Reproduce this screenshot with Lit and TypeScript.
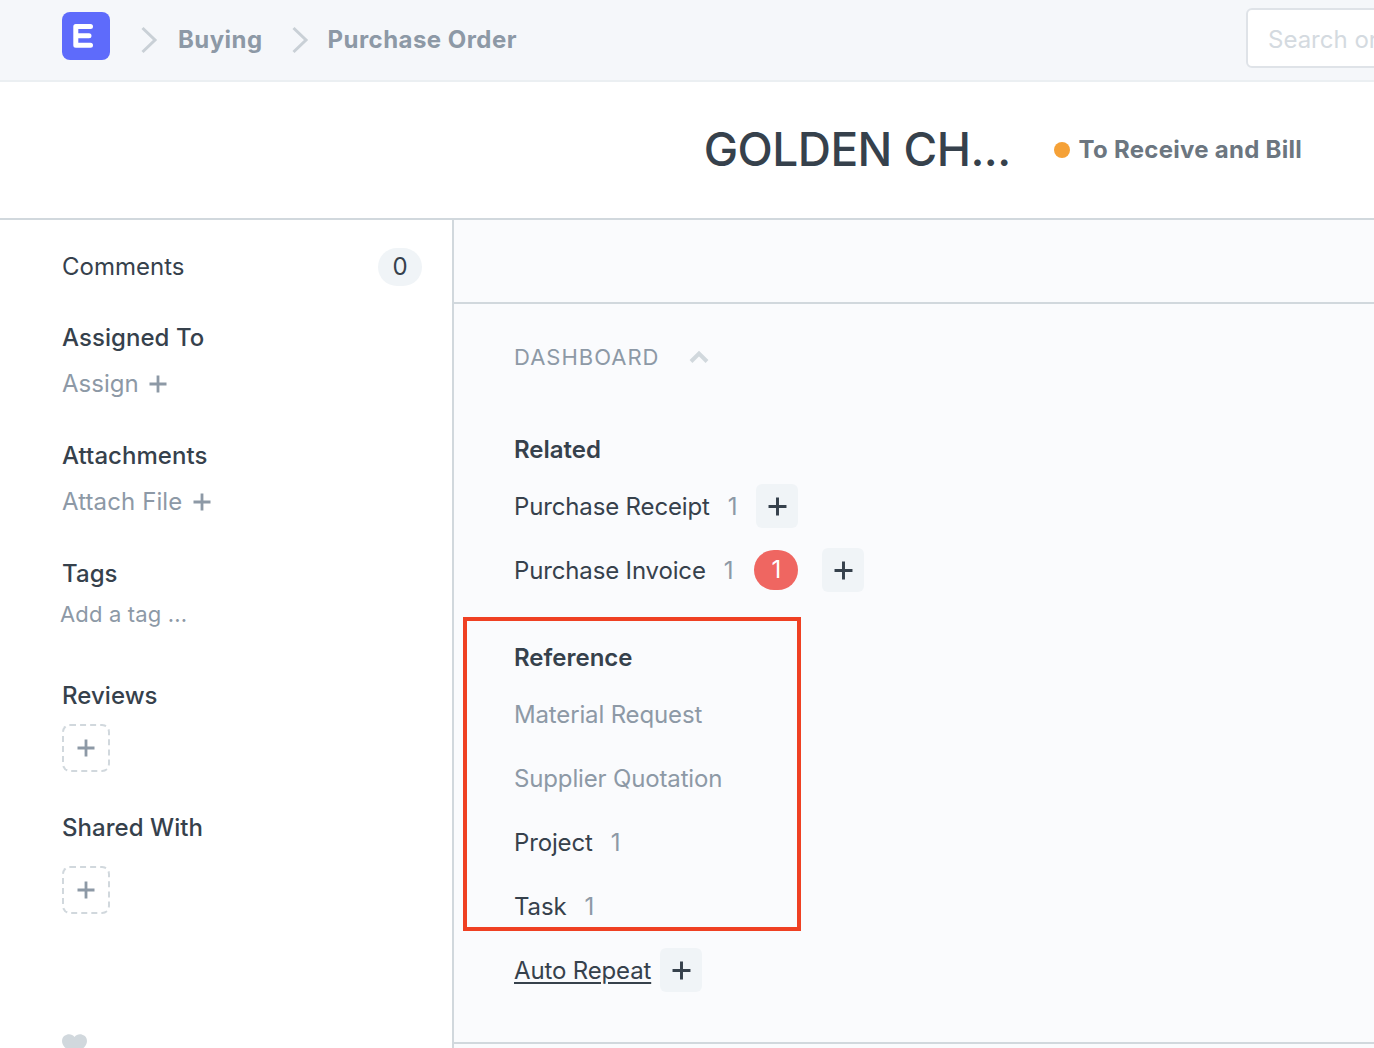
import { LitElement, html, css, svg } from 'lit';
import { customElement } from 'lit/decorators.js';

const plus = (size: number, weight: number) => html`<svg class="plus" width=${size} height=${size} viewBox="0 0 18 18">
  ${svg`<path d="M9 0.5V17.5M0.5 9H17.5" fill="none" stroke="currentColor" stroke-width=${weight}/>`}
</svg>`;

const chevron = html`<svg class="crumb-arrow" width="18" height="28" viewBox="0 0 18 28">
  <path d="M2.5 2L15 14L2.5 26" fill="none" stroke="#c9d0d6" stroke-width="3"/>
</svg>`;

@customElement('app-root')
export class AppRoot extends LitElement {
  static override styles = css`
    :host {
      display: block;
      position: relative;
      height: 1048px;
      overflow: hidden;
      background: #fff;
      color: #36414c;
      font-family: 'Inter', 'Liberation Sans', sans-serif;
      font-size: 24px;
      line-height: 36px;
    }

    .navbar {
      display: flex;
      align-items: center;
      height: 80px;
      padding-left: 62px;
      background: #f5f7fa;
      border-bottom: 2px solid #ebeff2;
      overflow: hidden;
    }
    .logo {
      display: block;
      flex: none;
      margin-bottom: 8px;
    }
    .crumb-arrow {
      flex: none;
      margin: 0 20px 0 30px;
    }
    .crumb-arrow.second {
      margin: 0 19px 0 28px;
    }
    .crumb {
      color: #8d99a6;
      font-weight: 700;
      letter-spacing: 0.45px;
      white-space: nowrap;
    }
    .search {
      flex: none;
      box-sizing: border-box;
      width: 300px;
      height: 60px;
      margin-left: auto;
      margin-right: -172px;
      margin-bottom: 5px;
      padding: 4px 20px 0;
      display: flex;
      align-items: center;
      background: #fff;
      border: 2px solid #dfe3e8;
      border-radius: 6px;
      color: #d4dae0;
      white-space: nowrap;
    }

    .title-bar {
      display: flex;
      align-items: center;
      justify-content: flex-end;
      height: 136px;
      padding-right: 72px;
      border-bottom: 2px solid #d1d8dd;
    }
    .title {
      margin-bottom: 2px;
      font-size: 46px;
      line-height: 56px;
      font-weight: 500;
      letter-spacing: -0.55px;
      white-space: nowrap;
    }
    .status {
      display: flex;
      align-items: center;
      gap: 9px;
      margin-left: 43px;
      color: #6c7680;
      font-weight: 700;
      letter-spacing: 0.27px;
    }
    .dot {
      width: 16px;
      height: 16px;
      border-radius: 50%;
      background: #f5a137;
    }

    .body {
      display: flex;
      height: 828px;
    }

    .sidebar {
      box-sizing: border-box;
      width: 454px;
      flex: none;
      padding: 28px 30px 0 62px;
      border-right: 2px solid #d1d8dd;
    }
    .comments {
      display: flex;
      align-items: center;
      justify-content: space-between;
      height: 38px;
    }
    .count-pill {
      width: 44px;
      height: 38px;
      display: flex;
      align-items: center;
      justify-content: center;
      border-radius: 19px;
      background: #f0f4f7;
    }
    .side-section {
      margin-top: 36px;
    }
    .side-section.first {
      margin-top: 34px;
    }
    .side-title {
      font-weight: 500;
      margin-bottom: 10px;
      letter-spacing: 0.05px;
    }
    .side-action {
      display: flex;
      align-items: center;
      gap: 10px;
      color: #8d99a6;
    }
    .side-action.wide {
      gap: 11px;
      letter-spacing: 0.1px;
    }
    .tag-input {
      margin: -6px 0 0 -2px;
      color: #8d99a6;
      font-size: 22px;
      letter-spacing: 0.15px;
    }
    .side-section.reviews {
      margin-top: 46px;
    }
    .side-section.shared {
      margin-top: 38px;
    }
    .side-section.shared .side-title {
      margin-bottom: 20px;
    }
    .dashed {
      box-sizing: border-box;
      width: 48px;
      height: 48px;
      display: flex;
      align-items: center;
      justify-content: center;
      border: 2px dashed #d1d8dd;
      border-radius: 8px;
      color: #8d99a6;
    }
    .heart {
      display: block;
      margin-top: 120px;
    }

    .main {
      flex: 1;
      min-width: 0;
      background: #fafbfd;
    }
    .toolbar-band {
      height: 82px;
      border-bottom: 2px solid #d1d8dd;
    }
    .dashboard {
      padding: 0 0 40px 60px;
      border-bottom: 2px solid #d1d8dd;
    }
    .dash-head {
      display: flex;
      align-items: center;
      gap: 30px;
      height: 105px;
      margin-bottom: 17px;
      color: #8d99a6;
      font-size: 22px;
      letter-spacing: 1px;
    }
    .group + .group {
      margin-top: 32px;
    }
    .group-title {
      height: 48px;
      display: flex;
      align-items: center;
      font-weight: 600;
    }
    .row {
      box-sizing: border-box;
      display: flex;
      align-items: center;
      height: 64px;
      padding-top: 2px;
      letter-spacing: -0.15px;
      white-space: nowrap;
    }
    .row.off {
      color: #8d99a6;
    }
    .count {
      margin-left: 18px;
      color: #8d99a6;
    }
    .add {
      width: 42px;
      height: 44px;
      flex: none;
      display: flex;
      align-items: center;
      justify-content: center;
      margin: -2px 0 0 19px;
      border-radius: 6px;
      background: #f0f4f7;
    }
    .add.after-badge {
      margin-left: 24px;
    }
    .add.tight {
      margin-left: 9px;
    }
    .badge {
      width: 44px;
      height: 40px;
      display: flex;
      align-items: center;
      justify-content: center;
      margin: -2px 0 0 21px;
      border-radius: 20px;
      background: #ef6661;
      color: #fff;
    }
    .link {
      text-decoration: underline;
      text-underline-offset: 3px;
    }

    .highlight {
      position: absolute;
      left: 463px;
      top: 617px;
      box-sizing: border-box;
      width: 338px;
      height: 314px;
      border: 4px solid #ef4023;
      pointer-events: none;
    }
  `;

  override render() {
    return html`
      <header class="navbar">
        <svg class="logo" width="48" height="48" viewBox="0 0 48 48" role="img" aria-label="ERPNext">
          <rect width="48" height="48" rx="8" fill="#5e6bfb"/>
          <path d="M28.5 14.5H13.8V33.2H28.5M13.8 23.8H27" fill="none" stroke="#fff" stroke-width="5" stroke-linecap="round" stroke-linejoin="round"/>
        </svg>
        ${chevron}
        <span class="crumb">Buying</span>
        <svg class="crumb-arrow second" width="18" height="28" viewBox="0 0 18 28">
          <path d="M2.5 2L15 14L2.5 26" fill="none" stroke="#c9d0d6" stroke-width="3"/>
        </svg>
        <span class="crumb">Purchase Order</span>
        <div class="search">Search or type a command</div>
      </header>

      <div class="title-bar">
        <div class="title">GOLDEN CH...</div>
        <div class="status"><span class="dot"></span>To Receive and Bill</div>
      </div>

      <div class="body">
        <aside class="sidebar">
          <div class="comments"><span>Comments</span><span class="count-pill">0</span></div>

          <div class="side-section first">
            <div class="side-title">Assigned To</div>
            <div class="side-action">Assign ${plus(18, 2.8)}</div>
          </div>

          <div class="side-section">
            <div class="side-title">Attachments</div>
            <div class="side-action wide">Attach File ${plus(18, 2.8)}</div>
          </div>

          <div class="side-section">
            <div class="side-title">Tags</div>
            <div class="tag-input">Add a tag ...</div>
          </div>

          <div class="side-section reviews">
            <div class="side-title">Reviews</div>
            <div class="dashed">${plus(18, 2.8)}</div>
          </div>

          <div class="side-section shared">
            <div class="side-title">Shared With</div>
            <div class="dashed">${plus(18, 2.8)}</div>
          </div>

          <svg class="heart" width="25" height="23" viewBox="0 0 25 23">
            <path d="M12.5 23L2.5 13C-0.8 9.6 -0.8 4.4 2.5 1.8C5.8 -0.8 10.2 -0.3 12.5 3C14.8 -0.3 19.2 -0.8 22.5 1.8C25.8 4.4 25.8 9.6 22.5 13Z" fill="#d1d8dd"/>
          </svg>
        </aside>

        <main class="main">
          <div class="toolbar-band"></div>
          <section class="dashboard">
            <div class="dash-head">
              <span>DASHBOARD</span>
              <svg width="20" height="14" viewBox="0 0 20 14">
                <path d="M2 11.5L10 3.5L18 11.5" fill="none" stroke="#d1d8dd" stroke-width="4"/>
              </svg>
            </div>

            <div class="group">
              <div class="group-title">Related</div>
              <div class="row">
                Purchase Receipt<span class="count">1</span>
                <span class="add">${plus(19, 2.8)}</span>
              </div>
              <div class="row">
                Purchase Invoice<span class="count">1</span>
                <span class="badge">1</span>
                <span class="add after-badge">${plus(19, 2.8)}</span>
              </div>
            </div>

            <div class="group">
              <div class="group-title">Reference</div>
              <div class="row off">Material Request</div>
              <div class="row off">Supplier Quotation</div>
              <div class="row">Project<span class="count">1</span></div>
              <div class="row">Task<span class="count">1</span></div>
              <div class="row">
                <span class="link">Auto Repeat</span>
                <span class="add tight">${plus(19, 2.8)}</span>
              </div>
            </div>
          </section>
        </main>
      </div>

      <div class="highlight"></div>
    `;
  }
}
